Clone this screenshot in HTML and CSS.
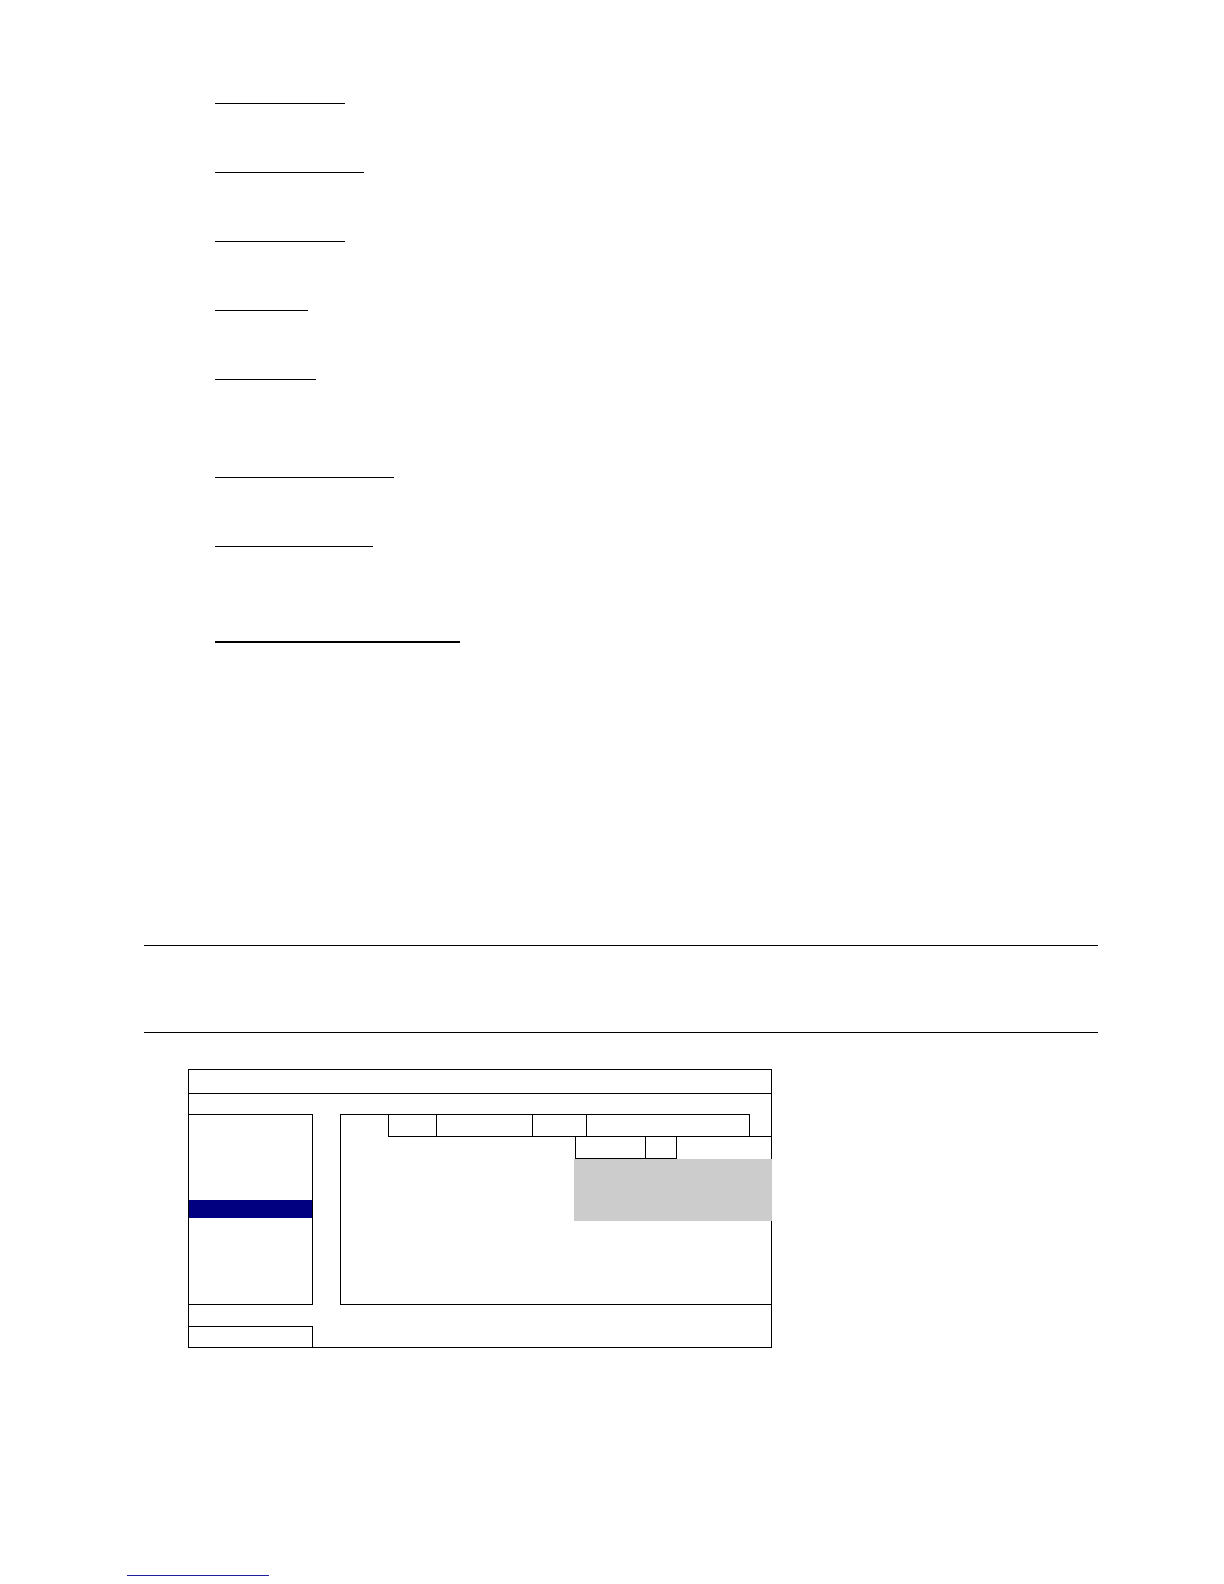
FILE: index.html
```html
<!DOCTYPE html>
<html lang="en">
<head>
<meta charset="utf-8">
<title>Page</title>
<link rel="stylesheet" href="styles.css">
</head>
<body>
<div class="page">
  <div class="headings">
    <div class="uline w1"></div>
    <div class="uline w2"></div>
    <div class="uline w1"></div>
    <div class="uline w4"></div>
    <div class="uline w5"></div>
    <div class="uline w6 gap-lg"></div>
    <div class="uline w7"></div>
    <div class="uline w8 thick"></div>
  </div>

  <div class="rule rule-first"></div>
  <div class="rule rule-second"></div>

  <div class="dialog">
    <div class="titlebar"></div>
    <div class="dlg-body">
      <div class="menu">
        <div class="menu-sel"></div>
      </div>
      <div class="panel">
        <div class="tabrow">
          <div class="tab-lead"></div>
          <div class="tab t1"></div>
          <div class="tab t2"></div>
          <div class="tab t3"></div>
          <div class="tab t4"></div>
          <div class="tab-fill"></div>
        </div>
        <div class="subtabrow">
          <div class="subtab s1"></div>
          <div class="subtab s2"></div>
        </div>
        <div class="grey-box"></div>
      </div>
    </div>
    <div class="dlg-foot">
      <div class="foot-btn"></div>
    </div>
  </div>

  <div class="footer-link"></div>
</div>
</body>
</html>
```

FILE: styles.css
```css
html, body {
  margin: 0;
  padding: 0;
  background: #ffffff;
  font-family: "Liberation Serif", serif;
}

.page {
  width: 1224px;
  height: 1584px;
  padding-top: 103px;
  box-sizing: border-box;
  overflow: hidden;
}

.headings {
  margin-left: 215px;
  display: flex;
  flex-direction: column;
  align-items: flex-start;
}

.uline {
  height: 1px;
  background: #000;
  margin-top: 68px;
}
.uline:first-child { margin-top: 0; }
.uline.gap-lg { margin-top: 97px; }
.uline.thick { height: 2px; margin-top: 94px; }

.w1 { width: 130px; }
.w2 { width: 149px; }
.w4 { width: 93px; }
.w5 { width: 101px; }
.w6 { width: 179px; }
.w7 { width: 158px; }
.w8 { width: 245px; }

.rule {
  height: 1px;
  background: #000;
  width: 954px;
  margin-left: 144px;
}
.rule-first { margin-top: 302px; }
.rule-second { margin-top: 86px; }

/* dialog mock */
.dialog {
  box-sizing: border-box;
  width: 584px;
  height: 279px;
  margin-top: 36px;
  margin-left: 188px;
  border: 1px solid #000;
  display: flex;
  flex-direction: column;
}

.titlebar {
  box-sizing: border-box;
  height: 24px;
  border-bottom: 1px solid #000;
}

.dlg-body {
  display: flex;
  padding-top: 20px;
  gap: 27px;
}

.menu {
  box-sizing: border-box;
  width: 124px;
  height: 191px;
  border-top: 1px solid #000;
  border-right: 1px solid #000;
  border-bottom: 1px solid #000;
}

.menu-sel {
  margin-top: 85px;
  height: 18px;
  background: #000080;
}

.panel {
  box-sizing: border-box;
  flex: 1;
  height: 191px;
  border-left: 1px solid #000;
  border-bottom: 1px solid #000;
  display: flex;
  flex-direction: column;
}

.tabrow {
  display: flex;
  height: 23px;
}

.tab-lead {
  box-sizing: border-box;
  width: 47px;
  border-top: 1px solid #000;
}

.tab {
  box-sizing: border-box;
  border-top: 1px solid #000;
  border-left: 1px solid #000;
  border-bottom: 1px solid #000;
}
.t1 { width: 48px; }
.t2 { width: 96px; }
.t3 { width: 54px; }
.t4 { width: 164px; border-right: 1px solid #000; }

.tab-fill {
  box-sizing: border-box;
  flex: 1;
  border-bottom: 1px solid #000;
}

.subtabrow {
  display: flex;
  height: 22px;
  padding-left: 234px;
}

.subtab {
  box-sizing: border-box;
  height: 22px;
  border-left: 1px solid #000;
  border-bottom: 1px solid #000;
}
.s1 { width: 70px; }
.s2 { width: 32px; border-right: 1px solid #000; }

.grey-box {
  height: 62px;
  margin-left: 233px;
  margin-right: -1px;
  background: #cccccc;
}

.dlg-foot {
  padding-top: 21px;
}

.foot-btn {
  box-sizing: border-box;
  width: 124px;
  height: 21px;
  border-top: 1px solid #000;
  border-right: 1px solid #000;
}

.footer-link {
  margin-top: 227px;
  margin-left: 127px;
  width: 142px;
  height: 1px;
  background: #1f1f9f;
}
```
